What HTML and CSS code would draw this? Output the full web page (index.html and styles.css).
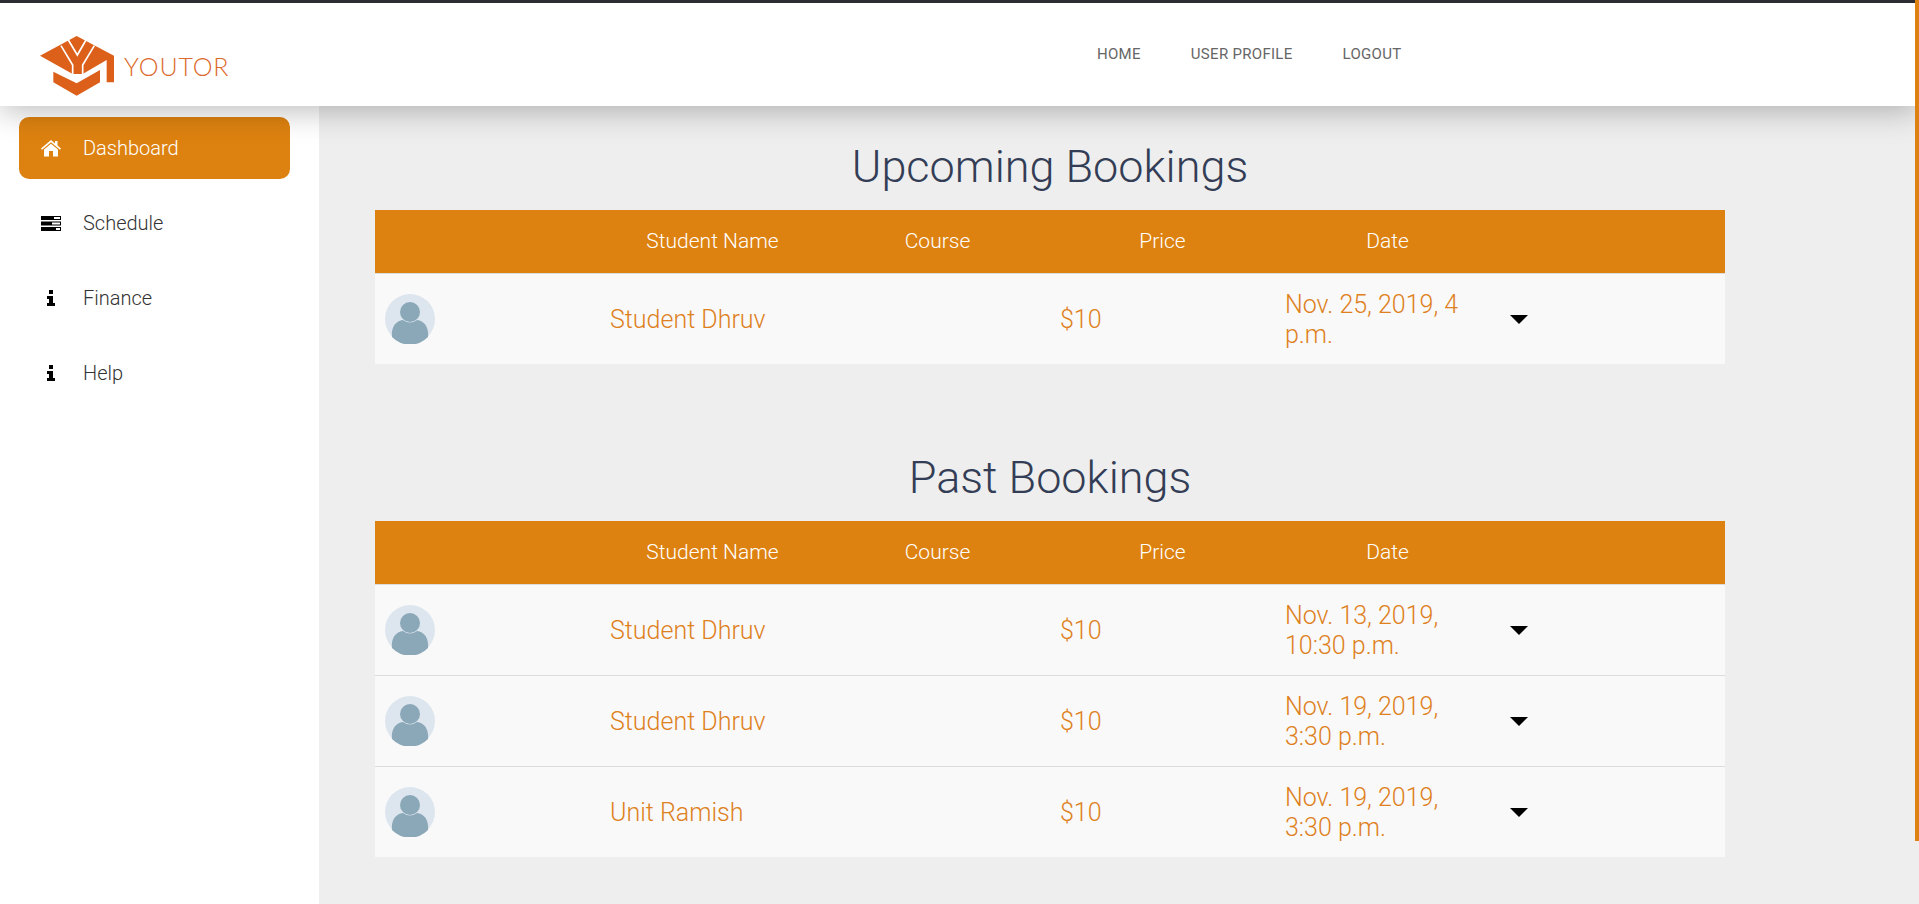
FILE: index.html
```html
<!DOCTYPE html>
<html lang="en">
<head>
	<meta charset="UTF-8">
	<title>Youtor</title>
	<link rel="stylesheet" href="styles.css">
</head>
<body>
	<header class="topbar">
		<a class="logo" href="#">
			<svg class="logo-mark" viewBox="120 108 222 180" width="74" height="60">
				<path fill="#dc5f1a" d="M230 108 L342 167 V247 H320 V180 L248 222 H218 L120 167 Z"/>
				<path fill="#dc5f1a" d="M160 215 L230 250 L300 210 V247 L230 287 L160 247 Z"/>
				<path fill="none" stroke="#fff" stroke-width="5" d="M183 137 L218 195 V225 M283 137 L248 195 V225 M205 120 L232 165 L258 120"/>
			</svg>
			<span class="logo-text">YOUTOR</span>
		</a>
		<nav class="topnav">
			<a href="#">Home</a>
			<a href="#">User Profile</a>
			<a href="#">Logout</a>
		</nav>
	</header>

	<div class="layout">
		<aside class="sidebar">
			<a class="side-link active" href="#">
				<span class="side-icon">
					<svg viewBox="0 0 20 17" width="20" height="17"><path fill="currentColor" d="M10 0 L14 3.4 V1 H16.5 V5.5 L20 8.6 L19 9.8 L10 2.3 L1 9.8 L0 8.6 Z M10 3.8 L17 9.6 V16.5 H12 V11 H8 V16.5 H3 V9.6 Z"/></svg>
				</span>
				Dashboard
			</a>
			<a class="side-link" href="#">
				<span class="side-icon">
					<svg viewBox="0 0 20 15" width="20" height="15"><path fill="currentColor" fill-rule="evenodd" d="M0 0 H20 V4 H0 Z M13 1 V3 H19 V1 Z M0 5.5 H20 V9.5 H0 Z M11 6.5 V8.5 H19 V6.5 Z M0 11 H20 V15 H0 Z M15 12 V14 H19 V12 Z"/></svg>
				</span>
				Schedule
			</a>
			<a class="side-link" href="#">
				<span class="side-icon">
					<svg viewBox="0 0 8 16" width="8" height="16"><path fill="currentColor" d="M2 0 H6 V4 H2 Z M0 6 H6 V13 H8 V16 H0 V13 H2 V9 H0 Z"/></svg>
				</span>
				Finance
			</a>
			<a class="side-link" href="#">
				<span class="side-icon">
					<svg viewBox="0 0 8 16" width="8" height="16"><path fill="currentColor" d="M2 0 H6 V4 H2 Z M0 6 H6 V13 H8 V16 H0 V13 H2 V9 H0 Z"/></svg>
				</span>
				Help
			</a>
		</aside>

		<main class="content">
			<section class="bookings">
				<h2>Upcoming Bookings</h2>
				<table class="book-table">
					<thead>
						<tr><th></th><th>Student Name</th><th>Course</th><th>Price</th><th>Date</th><th></th></tr>
					</thead>
					<tbody>
						<tr>
							<td><svg class="avatar" viewBox="0 0 50 50"><circle cx="25" cy="25" r="25" fill="#dde6ee"/><circle cx="25" cy="18" r="10" fill="#8ba8b9"/><path fill="#8ba8b9" d="M7 43 C6 34 10 27 18 26 Q25 31 32 26 C40 27 44 34 43 43 A25 25 0 0 1 7 43 Z"/></svg></td>
							<td class="text-cell">Student Dhruv</td><td></td><td class="text-cell">$10</td><td class="text-cell">Nov. 25, 2019, 4 p.m.</td><td class="text-cell"><span class="caret"></span></td>
						</tr>
					</tbody>
				</table>
			</section>

			<section class="bookings past">
				<h2>Past Bookings</h2>
				<table class="book-table">
					<thead>
						<tr><th></th><th>Student Name</th><th>Course</th><th>Price</th><th>Date</th><th></th></tr>
					</thead>
					<tbody>
						<tr>
							<td><svg class="avatar" viewBox="0 0 50 50"><circle cx="25" cy="25" r="25" fill="#dde6ee"/><circle cx="25" cy="18" r="10" fill="#8ba8b9"/><path fill="#8ba8b9" d="M7 43 C6 34 10 27 18 26 Q25 31 32 26 C40 27 44 34 43 43 A25 25 0 0 1 7 43 Z"/></svg></td>
							<td class="text-cell">Student Dhruv</td><td></td><td class="text-cell">$10</td><td class="text-cell">Nov. 13, 2019, 10:30 p.m.</td><td class="text-cell"><span class="caret"></span></td>
						</tr>
						<tr>
							<td><svg class="avatar" viewBox="0 0 50 50"><circle cx="25" cy="25" r="25" fill="#dde6ee"/><circle cx="25" cy="18" r="10" fill="#8ba8b9"/><path fill="#8ba8b9" d="M7 43 C6 34 10 27 18 26 Q25 31 32 26 C40 27 44 34 43 43 A25 25 0 0 1 7 43 Z"/></svg></td>
							<td class="text-cell">Student Dhruv</td><td></td><td class="text-cell">$10</td><td class="text-cell">Nov. 19, 2019, 3:30 p.m.</td><td class="text-cell"><span class="caret"></span></td>
						</tr>
						<tr>
							<td><svg class="avatar" viewBox="0 0 50 50"><circle cx="25" cy="25" r="25" fill="#dde6ee"/><circle cx="25" cy="18" r="10" fill="#8ba8b9"/><path fill="#8ba8b9" d="M7 43 C6 34 10 27 18 26 Q25 31 32 26 C40 27 44 34 43 43 A25 25 0 0 1 7 43 Z"/></svg></td>
							<td class="text-cell">Unit Ramish</td><td></td><td class="text-cell">$10</td><td class="text-cell">Nov. 19, 2019, 3:30 p.m.</td><td class="text-cell"><span class="caret"></span></td>
						</tr>
					</tbody>
				</table>
			</section>
		</main>
	</div>

	<div class="scroll-thumb"></div>
</body>
</html>
```

FILE: styles.css
```css
* {
	box-sizing: border-box;
}

html, body {
	height: 100%;
}

body {
	margin: 0;
	overflow: hidden;
	background-color: #eee;
	font-family: Roboto, "Liberation Sans", sans-serif;
	font-weight: 300;
}

a {
	text-decoration: none;
	color: inherit;
}

.topbar {
	position: relative;
	z-index: 2;
	display: flex;
	align-items: center;
	height: 106px;
	border-top: 3px solid #2a2e32;
	background-color: #fff;
	box-shadow: 0 4px 30px rgba(0, 0, 0, .28);
}

.logo {
	display: flex;
	align-items: flex-start;
	align-self: flex-start;
	width: 1097px;
	padding-left: 40px;
	padding-top: 33px;
}

.logo-mark {
	display: block;
}

.logo-text {
	margin-left: 10px;
	margin-top: 17px;
	font-family: Lato, sans-serif;
	font-weight: 300;
	font-size: 25px;
	line-height: 26px;
	letter-spacing: .8px;
	color: #dc6a2c;
}

.topnav {
	display: flex;
	gap: 50px;
	margin-top: -1px;
	font-size: 15px;
	letter-spacing: .3px;
	font-weight: 400;
	text-transform: uppercase;
	color: #666;
}

.layout {
	display: flex;
	height: calc(100% - 106px);
}

.sidebar {
	flex: 0 0 319px;
	padding: 11px 29px 0 19px;
	background-color: #fff;
}

.side-link {
	display: flex;
	align-items: center;
	height: 62px;
	margin-bottom: 13px;
	border-radius: 10px;
	font-size: 20px;
	color: #333;
}

.side-link.active {
	background-color: #dd8210;
	color: #fff;
}

.side-icon {
	display: flex;
	justify-content: center;
	flex: 0 0 64px;
	padding-right: 1px;
	color: #000;
}

.active .side-icon {
	color: #fff;
}

.side-icon svg {
	display: block;
}

.content {
	flex: 1;
	padding: 0 0 0 56px;
}

.bookings h2 {
	width: 1350px;
	margin: 0;
	padding-top: 34px;
	height: 104px;
	text-align: center;
	font-size: 45px;
	line-height: 54px;
	font-weight: 300;
	color: #333d55;
}

.past {
	margin-top: 53px;
}

.book-table {
	width: 1350px;
	table-layout: fixed;
	border-collapse: collapse;
}

.book-table th {
	height: 63px;
	padding: 0 10px;
	background-color: #dd8210;
	font-size: 21px;
	font-weight: 300;
	color: #fff;
	text-align: center;
}

.book-table td {
	height: 91px;
	padding: 0 10px;
	background-color: #f9f9f9;
	border-top: 1px solid #ddd;
	font-size: 25px;
	line-height: 30px;
	color: #de8020;
	vertical-align: middle;
}

.book-table td.text-cell {
	padding-top: 2px;
}

.avatar {
	display: block;
	width: 50px;
	height: 50px;
}

.caret {
	display: block;
	width: 0;
	height: 0;
	border-style: solid;
	border-width: 9px 9px 0;
	border-color: #000 transparent transparent;
}

.scroll-thumb {
	position: fixed;
	top: 0;
	right: 0;
	z-index: 3;
	width: 4px;
	height: 841px;
	background-color: #dd8210;
}
```
